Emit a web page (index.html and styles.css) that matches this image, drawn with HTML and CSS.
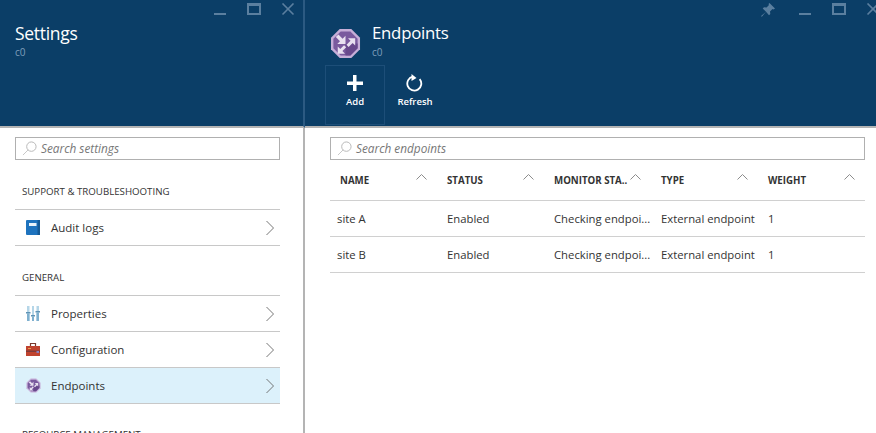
FILE: index.html
```html
<!DOCTYPE html>
<html lang="en">
<head>
<meta charset="utf-8">
<title>Endpoints</title>
<link rel="stylesheet" href="styles.css">
</head>
<body>
<svg class="defs" width="0" height="0" aria-hidden="true">
  <defs>
    <symbol id="i-min" viewBox="0 0 14 14"><rect x="1" y="10" width="12" height="2" fill="currentColor"/></symbol>
    <symbol id="i-max" viewBox="0 0 14 14"><path fill="currentColor" fill-rule="evenodd" d="M0 0h14v12H0zM2 3v7h10V3z"/></symbol>
    <symbol id="i-close" viewBox="0 0 14 14"><path d="M1.500 .5l11 11M12.500 .5l-11 11" stroke="currentColor" stroke-width="1.600" fill="none"/></symbol>
    <symbol id="i-search" viewBox="0 0 16 16"><circle cx="10" cy="6" r="5" fill="none" stroke="#b4b4b4"/><path d="M6.500 9.500L1 15" stroke="#c4c4c4" fill="none"/></symbol>
    <symbol id="i-chev" viewBox="0 0 10 16"><path d="M1.500 1l7 7-7 7" fill="none" stroke="#666" stroke-width=".9"/></symbol>
    <symbol id="i-caret" viewBox="0 0 11 6"><path d="M.5 5.500l5-5 5 5" fill="none" stroke="#8c8c8c" stroke-width="1"/></symbol>
    <symbol id="i-tm" viewBox="0 0 32 32">
      <path fill="#c6aed8" d="M10 1h12l9 9v12l-9 9H10l-9-9V10z"/>
      <path fill="#7a5a9e" d="M11 3.500h10l7.500 7.500v10L21 28.500H11L3.500 21V11z"/>
      <path fill="#68488c" d="M16 16h12.500v5L21 28.500h-5z"/>
      <path fill="#e8e0f0" d="M16 8v8.500H7.500l2.800-2.800L6 9.400 8.700 6.700l4.300 4.300z"/>
      <path fill="#e8e0f0" d="M26 10.500V18l-2.600-2.600-4.200 4.200-2.200-2.200 4.200-4.200-2.600-2.700z"/>
      <path fill="#e8e0f0" d="M8 26.500V19l2.600 2.600 3.900-3.900 2.200 2.200-3.900 3.900 2.700 2.700z"/>
    </symbol>
  </defs>
</svg>
<main class="desk">
  <section class="blade blade-left">
    <header class="head">
      <div class="controls">
        <svg class="ctl"><use href="#i-min"/></svg>
        <svg class="ctl"><use href="#i-max"/></svg>
        <svg class="ctl"><use href="#i-close"/></svg>
      </div>
      <h1 class="title title-left">Settings</h1>
      <p class="sub">c0</p>
    </header>
    <div class="body body-left">
      <label class="search">
        <svg class="search-ico"><use href="#i-search"/></svg>
        <span class="search-text">Search settings</span>
      </label>
      <h2 class="group">SUPPORT &amp; TROUBLESHOOTING</h2>
      <ul class="menu">
        <li class="item">
          <svg class="ico" viewBox="0 0 14 15"><rect x="0" y="0" width="14" height="15" rx="1" fill="#1e73be"/><rect x="11.500" y="0" width="2.500" height="15" fill="#155a96"/><rect x="3" y="3" width="7.500" height="3" fill="#e8f2fa"/></svg>
          <span class="label">Audit logs</span>
          <svg class="chev"><use href="#i-chev"/></svg>
        </li>
      </ul>
      <h2 class="group group-second">GENERAL</h2>
      <ul class="menu">
        <li class="item">
          <svg class="ico" viewBox="0 0 14 15"><path fill="#b5d6e8" d="M1 0h2.500v15H1zM6 0h2v15H6zM10.500 0H13v15h-2.500z"/><path fill="#5f93b5" d="M0 6h4.500v1.500H0zM5 9h4v1.500H5zM9.500 5H14v1.500H9.500z"/><path fill="#7fb0cf" d="M1 8h2.500v7H1zM6 11h2v4H6zM10.500 7H13v8h-2.500z"/></svg>
          <span class="label">Properties</span>
          <svg class="chev"><use href="#i-chev"/></svg>
        </li>
        <li class="item">
          <svg class="ico" viewBox="0 0 14 15"><path d="M4.500 4V1.500h5V4" fill="none" stroke="#7a3a2e" stroke-width="1.200"/><rect x="0" y="4" width="14" height="10" fill="#c0432f"/><rect x="0" y="8.500" width="14" height="1.500" fill="#7e3a3a"/><rect x="2" y="6" width="3" height="1" fill="#e8a34a"/><rect x="10.500" y="9" width="2.500" height="2" fill="#8b7fc0"/></svg>
          <span class="label">Configuration</span>
          <svg class="chev"><use href="#i-chev"/></svg>
        </li>
        <li class="item item-active">
          <svg class="ico ico-tm"><use href="#i-tm"/></svg>
          <span class="label">Endpoints</span>
          <svg class="chev"><use href="#i-chev"/></svg>
        </li>
      </ul>
      <h2 class="group group-third">RESOURCE MANAGEMENT</h2>
    </div>
  </section>
  <section class="blade blade-right">
    <header class="head">
      <div class="controls">
        <svg class="ctl ctl-pin" viewBox="0 0 14 14"><path fill="currentColor" d="M8.500 0L14 5.500l-1.500 1-1-.5-2.500 2.500.3 2.500-1.300 1.300L5 8.800.8 13.800 0 13l5-4.200L1.700 5.500 3 4.200l2.500.3L8 2l-.5-1z"/></svg>
        <svg class="ctl"><use href="#i-min"/></svg>
        <svg class="ctl"><use href="#i-max"/></svg>
        <svg class="ctl"><use href="#i-close"/></svg>
      </div>
      <div class="head-row">
        <svg class="head-ico"><use href="#i-tm"/></svg>
        <div>
          <h1 class="title title-right">Endpoints</h1>
          <p class="sub">c0</p>
        </div>
      </div>
      <div class="toolbar">
        <button class="cmd cmd-add" type="button">
          <svg class="cmd-ico" viewBox="0 0 18 18"><path fill="#fff" d="M7 1h3.500v6.500H17V11h-6.500v6H7v-6H1V7.500h6z"/></svg>
          <span>Add</span>
        </button>
        <button class="cmd" type="button">
          <svg class="cmd-ico" viewBox="0 0 18 18"><path d="M12.500 4.200A7 7 0 1 1 5.500 3.300" fill="none" stroke="#fff" stroke-width="1.800" transform="rotate(12 9 10)"/><path fill="#fff" d="M5.500 0v7l5-3z"/></svg>
          <span>Refresh</span>
        </button>
      </div>
    </header>
    <div class="body body-right">
      <label class="search">
        <svg class="search-ico"><use href="#i-search"/></svg>
        <span class="search-text">Search endpoints</span>
      </label>
      <div class="table">
        <div class="tr tr-head">
          <div class="th th-first"><span>NAME</span><svg class="caret"><use href="#i-caret"/></svg></div>
          <div class="th"><span>STATUS</span><svg class="caret"><use href="#i-caret"/></svg></div>
          <div class="th"><span>MONITOR STA..</span><svg class="caret"><use href="#i-caret"/></svg></div>
          <div class="th"><span>TYPE</span><svg class="caret"><use href="#i-caret"/></svg></div>
          <div class="th th-last"><span>WEIGHT</span><svg class="caret"><use href="#i-caret"/></svg></div>
        </div>
        <div class="tr">
          <div class="td td-first">site A</div>
          <div class="td">Enabled</div>
          <div class="td">Checking endpoi...</div>
          <div class="td">External endpoint</div>
          <div class="td">1</div>
        </div>
        <div class="tr">
          <div class="td td-first">site B</div>
          <div class="td">Enabled</div>
          <div class="td">Checking endpoi...</div>
          <div class="td">External endpoint</div>
          <div class="td">1</div>
        </div>
      </div>
    </div>
  </section>
</main>
</body>
</html>
```
FILE: styles.css
```css
* { box-sizing: border-box; }
html, body { margin: 0; padding: 0; height: 433px; overflow: hidden; background: #fff; }
body { font-family: "Open Sans", "Noto Sans", sans-serif; color: #333; font-size: 12px; }
.defs { display: block; height: 0; }
ul { list-style: none; margin: 0; padding: 0; }
h1, h2, p { margin: 0; font-weight: 400; }

.desk { display: flex; height: 433px; overflow: hidden; }
.blade { display: flex; flex-direction: column; height: 433px; }
.blade-left { width: 305px; flex: none; }
.blade-right { flex: 1; min-width: 0; }

.head { height: 128px; flex: none; background: #0b3e67; border-bottom: 2px solid #b4b4b4; color: #fff; }
.blade-left .head { border-right: 2px solid #2c5a82; padding-left: 15px; }
.controls { display: flex; justify-content: flex-end; align-items: flex-start; gap: 20px; height: 16px; padding-top: 3px; color: #5b7f9f; }
.blade-left .controls { padding-right: 8px; }
.blade-right .controls { margin-right: -4px; }
.ctl { width: 14px; height: 14px; flex: none; }
.ctl-pin { margin-right: 3px; }
.title { font-size: 17.500px; line-height: 24px; color: #fff; letter-spacing: -0.2px; }
.title-left { margin-top: 5px; letter-spacing: -0.3px; }
.title-right { font-size: 16.800px; letter-spacing: -0.25px; }
.sub { font-size: 10px; line-height: 12px; color: #7f9fbb; margin-top: 1px; }

.head-row { display: flex; align-items: flex-start; gap: 11px; padding: 5px 0 0 25px; height: 46px; }
.head-ico { width: 31px; height: 31px; margin-top: 7px; flex: none; }
.toolbar { display: flex; padding: 0 0 0 20px; margin-top: 3px; }
.cmd { width: 60px; height: 60px; padding: 8px 0 0; background: transparent; border: 1px solid transparent; color: #fff; font: 600 9.500px/12px "Open Sans", sans-serif; display: flex; flex-direction: column; align-items: center; gap: 4px; }
.cmd-add { border-color: #1d4e78; }
.cmd-ico { width: 18px; height: 18px; flex: none; }

.body { flex: 1; min-height: 0; overflow: hidden; }
.body-left { width: 305px; padding: 9px 23px 0 15px; border-right: 2px solid #b4b4b4; }
.body-right { padding: 9px 11px 0 25px; }

.search { display: flex; align-items: center; gap: 4px; height: 23px; padding-left: 6px; border: 1px solid #b0b0b0; color: #777; font-style: italic; font-size: 11.800px; }
.search-ico { width: 15px; height: 15px; flex: none; }
.search-text { line-height: 14px; padding-bottom: 2px; }

.group { font-size: 9.700px; line-height: 14px; color: #333; padding-left: 7px; }
.body-left > .group:first-of-type { margin-top: 25px; }
.group-second { margin-top: 25px; }
.group-third { margin-top: 24px; }
.body-left .group { margin-bottom: 10px; }

.menu { border-top: 1px solid #c8c8c8; }
.item { display: flex; align-items: center; height: 36px; border-bottom: 1px solid #c8c8c8; padding: 0 5px 0 11px; font-size: 11.500px; }
.item-active { background: #dcf1fb; }
.ico { width: 14px; height: 15px; flex: none; }
.ico-tm { width: 15px; }
.label { flex: 1; margin-left: 11px; }
.ico-tm + .label { margin-left: 10px; }
.chev { width: 10px; height: 16px; flex: none; }

.table { margin-top: 9px; }
.tr { display: grid; grid-template-columns: 117px 107px 107px 107px 97px; height: 36px; align-items: center; border-bottom: 1px solid #d0d0d0; }
.tr-head { height: 32px; align-items: start; padding-top: 5px; }
.th { display: flex; justify-content: space-between; align-items: flex-start; font-size: 9.700px; font-weight: 700; line-height: 14px; padding-right: 20px; color: #333; white-space: nowrap; }
.th-first { padding-left: 10px; }
.th-last { padding-right: 10px; }
.caret { width: 11px; height: 6px; flex: none; margin-top: 0; }
.td { font-size: 11.300px; white-space: nowrap; overflow: hidden; }
.td-first { padding-left: 7px; }
```
